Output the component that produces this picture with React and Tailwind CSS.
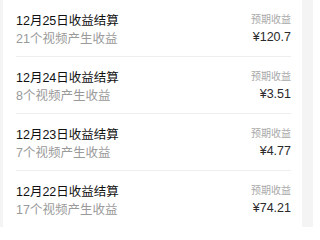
import React from 'react';

const rows = [
  { date: '12月25日', count: 21, amount: '¥120.7' },
  { date: '12月24日', count: 8, amount: '¥3.51' },
  { date: '12月23日', count: 7, amount: '¥4.77' },
  { date: '12月22日', count: 17, amount: '¥74.21' },
];

const font = { fontFamily: '"Liberation Sans", "Noto Sans CJK SC", sans-serif' };

function App() {
  return (
    <div className="w-[313px] h-[227px] overflow-hidden bg-[#f4f4f4] flex" style={font}>
      <div className="ml-[3px] w-[299px] bg-white pl-[13px] pr-[11px]">
        {rows.map((r) => (
          <div key={r.date} className="h-[57px] pt-[3px] flex items-center justify-between border-b border-[#eeeeee]">
            <div className="flex flex-col">
              <span className="text-[12.5px] leading-[18px] text-[#111111]">{r.date}收益结算</span>
              <span className="text-[12.5px] leading-[18px] text-[#9a9a9a]">{r.count}个视频产生收益</span>
            </div>
            <div className="flex flex-col items-end">
              <span className="text-[10px] leading-[16px] text-[#a8a8a8]">预期收益</span>
              <span className="text-[12.5px] leading-[19px] text-[#2a2a2a]">{r.amount}</span>
            </div>
          </div>
        ))}
      </div>
    </div>
  );
}

export default App;
